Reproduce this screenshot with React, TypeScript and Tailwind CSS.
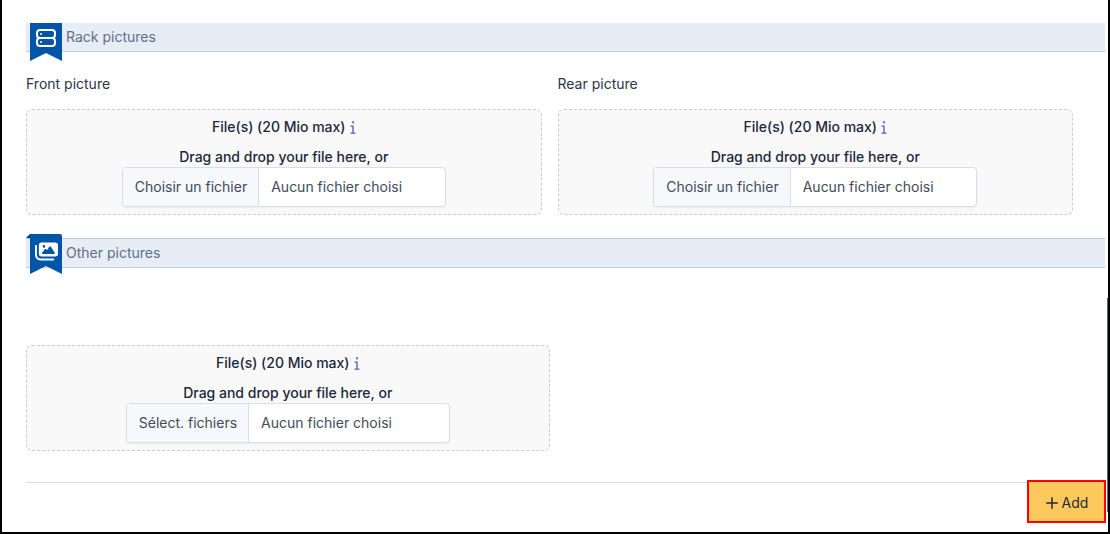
import type { ReactNode } from "react";
import { FaImages, FaInfo } from "react-icons/fa6";
import { TbPlus, TbServer } from "react-icons/tb";

function SectionHeader({ icon, title, folded }: { icon: ReactNode; title: string; folded?: boolean }) {
  return (
    <h2
      className={
        folded
          ? "relative flex h-[30px] items-center border-y border-[#bbd0e6] bg-[#e6edf5] pl-10 text-[#626f8b]"
          : "relative flex h-[29px] items-center border-b border-[#bbd0e6] bg-[#e6edf5] pl-10 text-[#626f8b]"
      }
    >
      <span className={folded ? "absolute -top-[5px] left-0 text-white" : "absolute top-0 left-0 text-white"}>
        <svg
          className="block"
          width="36"
          height={folded ? 40 : 38}
          viewBox={folded ? "0 0 36 40" : "0 2 36 38"}
          aria-hidden="true"
        >
          {folded && <path d="M0 4 L4 0 H8 V4 Z" fill="#003a70" />}
          <path
            d={folded ? "M4 1 Q4 0 6 0 H34 Q36 0 36 2 V40 L20 32 L4 40 Z" : "M4 2 H36 V40 L20 32 L4 40 Z"}
            fill="#0055a8"
          />
        </svg>
        <span className={folded ? "absolute top-[6px] left-[9px]" : "absolute top-[3px] left-2"}>{icon}</span>
      </span>
      {title}
    </h2>
  );
}

function DropZone({ id, button, multiple }: { id: string; button: string; multiple?: boolean }) {
  return (
    <div className="flex h-[106px] flex-col items-center rounded-md border border-dashed border-[#cccccc] bg-[#f9f9f9] pt-[7px]">
      <p className="flex h-5 items-center gap-1 font-medium text-[#1d273b]">
        File(s) (20 Mio max)
        <FaInfo className="h-[14px] w-[6px] text-[#6f86bd]" aria-label="Allowed file types" />
      </p>
      <p className="mt-[10px] h-5 font-medium text-[#1d273b]">Drag and drop your file here, or</p>
      <label
        htmlFor={id}
        className="flex h-10 w-[324px] cursor-pointer items-stretch overflow-hidden rounded border border-[#d9dee6] bg-white text-[#424b5a] shadow-xs"
      >
        <span className="flex items-center border-r border-[#d9dee6] bg-[#f6f8fb] pr-[11px] pl-3">{button}</span>
        <span className="flex items-center px-3">Aucun fichier choisi</span>
        <input id={id} type="file" multiple={multiple} className="sr-only" />
      </label>
    </div>
  );
}

export default function App() {
  return (
    <main className="relative flex min-h-screen flex-col border-x-2 border-b-2 border-black bg-white pt-[23px] pr-[3px] pb-[9px] pl-6 font-['Inter',sans-serif] text-[14px] leading-5 text-[#2b3648]">
      <SectionHeader title="Rack pictures" icon={<TbServer className="size-6" />} />

      <section className="mt-[22px] grid grid-cols-2 gap-4 pr-8">
        <div>
          <h3 className="mb-[15px]">Front picture</h3>
          <DropZone id="front-picture" button="Choisir un fichier" />
        </div>
        <div>
          <h3 className="mb-[15px]">Rear picture</h3>
          <DropZone id="rear-picture" button="Choisir un fichier" />
        </div>
      </section>

      <div className="mt-[23px]">
        <SectionHeader folded title="Other pictures" icon={<FaImages className="size-[23px]" />} />
      </div>

      <section className="mt-[77px] pr-8">
        <div className="w-1/2">
          <DropZone id="other-pictures" button="Sélect. fichiers" multiple />
        </div>
      </section>

      <footer className="mt-[31px] flex justify-end border-t border-[#dcdcdc] pr-px">
        <button
          type="button"
          className="-mt-px flex h-[39px] w-[75px] items-center justify-center gap-px bg-[#fec95c] pt-[2px] pr-[2px] text-[#1e293b] outline-2 outline-[#ff0000]"
        >
          <TbPlus className="size-[18px]" aria-hidden="true" />
          Add
        </button>
      </footer>

      <div className="absolute top-[298px] right-0 h-[214px] w-px bg-[#626976]" />
    </main>
  );
}
